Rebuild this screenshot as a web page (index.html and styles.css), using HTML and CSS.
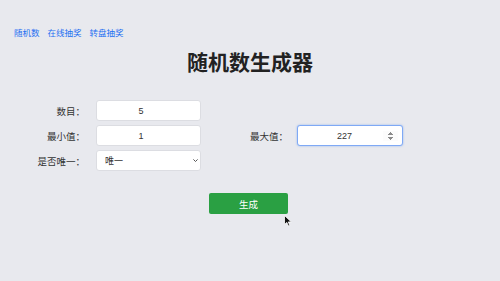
FILE: index.html
```html
<!DOCTYPE html>
<html lang="zh-CN">
<head>
  <meta charset="UTF-8" />
  <meta name="viewport" content="width=device-width, initial-scale=1.0" />
  <title>随机数生成器</title>
  <link rel="stylesheet" href="styles.css">
</head>
<body>
  <nav class="nav">
    <a href="#">随机数</a>
    <a href="#">在线抽奖</a>
    <a href="#">转盘抽奖</a>
  </nav>
  <h1 class="title">随机数生成器</h1>

  <form class="form" onsubmit="return false">
    <label class="label" for="count">数目：</label>
    <input class="field" type="number" id="count" value="5">
    <span></span><span></span>

    <label class="label" for="min">最小值：</label>
    <input class="field" type="number" id="min" value="1">
    <label class="label label-right" for="max">最大值：</label>
    <input class="field field-active" type="number" id="max" value="227" autofocus>

    <label class="label" for="unique">是否唯一：</label>
    <select class="field select" id="unique">
      <option>唯一</option>
      <option>不唯一</option>
    </select>
  </form>

  <div class="actions">
    <button class="btn" type="button">生成</button>
  </div>

  <svg class="cursor" width="8" height="12" viewBox="0 0 8 12">
    <path d="M0.5 0.5 L0.5 9.5 L2.8 7.4 L4.4 11 L5.8 10.4 L4.3 6.9 L7.3 6.9 Z" fill="#111" stroke="#fff" stroke-width="0.8"/>
  </svg>
</body>
</html>
```

FILE: styles.css
```css
* {
  margin: 0;
  padding: 0;
  box-sizing: border-box;
}

body {
  font-family: "Liberation Sans", "Noto Sans CJK SC", sans-serif;
  background: #e8e9ee;
  color: #333;
  width: 500px;
  height: 281px;
  padding-top: 28px;
  position: relative;
  overflow: hidden;
}

.nav {
  display: flex;
  gap: 8px;
  padding-left: 14px;
  font-size: 8.5px;
  line-height: 11px;
}

.nav a {
  color: #1d6ff2;
  text-decoration: none;
}

.title {
  text-align: center;
  font-size: 21px;
  font-weight: bold;
  color: #222;
  line-height: 30px;
  margin-top: 9px;
}

.form {
  display: grid;
  grid-template-columns: 94px 105px 92px 106px;
  column-gap: 2px;
  row-gap: 4px;
  margin-top: 22px;
  align-items: center;
}

.label {
  text-align: right;
  font-size: 9.5px;
  color: #333;
  padding-right: 9px;
}

.label-right {
  padding-right: 7px;
}

.field {
  height: 21px;
  width: 100%;
  border: 1px solid #dcdde2;
  border-radius: 3px;
  background: #fff;
  font-family: "Liberation Sans", "Noto Sans CJK SC", sans-serif;
  font-size: 9px;
  color: #333;
  text-align: center;
  outline: none;
}

.field-active {
  border: 1px solid #7fa9f5;
  box-shadow: 0 0 2px rgba(80, 140, 240, 0.6);
  padding: 0 4px 0 8px;
}

.select {
  text-align: left;
  padding-left: 8px;
  appearance: none;
  background-image: url("data:image/svg+xml;utf8,<svg xmlns='http://www.w3.org/2000/svg' width='5' height='3' viewBox='0 0 5 3'><path d='M0.4 0.4 L2.5 2.5 L4.6 0.4' fill='none' stroke='%23444' stroke-width='0.9'/></svg>");
  background-repeat: no-repeat;
  background-position: right 2px center;
}

.actions {
  display: flex;
  padding-left: 209px;
  margin-top: 22px;
}

.btn {
  width: 79px;
  height: 21px;
  border: none;
  border-radius: 2px;
  background: #2aa043;
  color: #fff;
  font-family: "Liberation Sans", "Noto Sans CJK SC", sans-serif;
  font-size: 9.5px;
}

.cursor {
  position: absolute;
  left: 284px;
  top: 215px;
}
```
